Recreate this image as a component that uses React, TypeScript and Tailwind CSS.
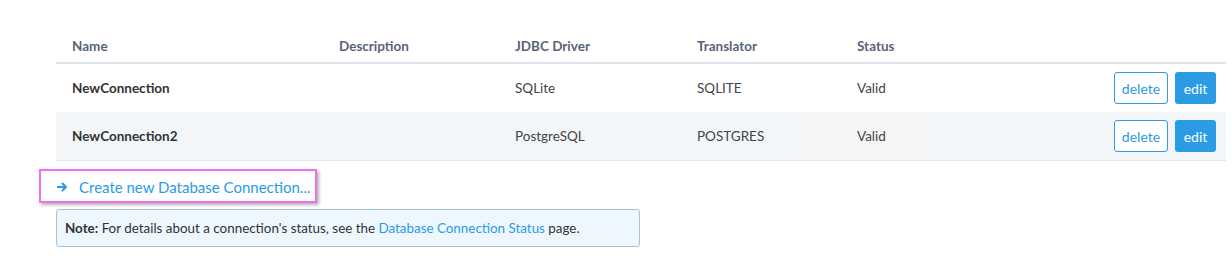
import React from "react";

const rows = [
  { name: "NewConnection", description: "", driver: "SQLite", translator: "SQLITE", status: "Valid" },
  { name: "NewConnection2", description: "", driver: "PostgreSQL", translator: "POSTGRES", status: "Valid" },
];

export default function App() {
  return (
    <div className="h-[275px] w-[1232px] overflow-hidden bg-white font-['Lato','Liberation_Sans',sans-serif] text-[13.5px] text-[#444]">
      <div className="pl-[56px] pr-[6px] pt-[30px]">
        <table className="w-full table-fixed border-separate border-spacing-0">
          <colgroup>
            <col className="w-[267px]" />
            <col className="w-[176px]" />
            <col className="w-[182px]" />
            <col className="w-[160px]" />
            <col className="w-[120px]" />
            <col />
          </colgroup>
          <thead>
            <tr className="text-left text-[#5a6478]">
              <th className="h-[34px] border-b-2 border-[#dfe4ea] px-4 font-bold">Name</th>
              <th className="border-b-2 border-[#dfe4ea] px-4 font-bold">Description</th>
              <th className="border-b-2 border-[#dfe4ea] px-4 font-bold">JDBC Driver</th>
              <th className="border-b-2 border-[#dfe4ea] px-4 font-bold">Translator</th>
              <th className="border-b-2 border-[#dfe4ea] px-4 font-bold">Status</th>
              <th className="border-b-2 border-[#dfe4ea]" />
            </tr>
          </thead>
          <tbody>
            {rows.map((r, i) => {
              const cell = i === 1 ? "h-[49px] border-b border-[#e3e7eb]" : "h-[48px]";
              return (
                <tr
                  key={r.name}
                  className={
                    i === 1
                      ? "bg-[linear-gradient(to_right,#f3f6f9_749px,#f5f5f5_749px,#f5f5f5_877px,#f3f6f9_877px)]"
                      : ""
                  }
                >
                  <td className={`${cell} px-4 font-bold text-[#333]`}>{r.name}</td>
                  <td className={`${cell} px-4`}>{r.description}</td>
                  <td className={`${cell} px-4`}>{r.driver}</td>
                  <td className={`${cell} px-4`}>{r.translator}</td>
                  <td className={`${cell} px-4`}>{r.status}</td>
                  <td className={`${cell} pr-[10px]`}>
                    <div className="flex justify-end gap-[7px]">
                      <button className="h-[32px] w-[54px] rounded-[3px] border border-[#2b9be6] bg-white text-[14px] text-[#2b9be6]">
                        delete
                      </button>
                      <button className="h-[32px] w-[41px] rounded-[3px] bg-[#2b9be6] text-[14px] text-white">
                        edit
                      </button>
                    </div>
                  </td>
                </tr>
              );
            })}
          </tbody>
        </table>
      </div>

      <div className="ml-[39px] mt-[8px] flex h-[34px] w-[278px] items-center border-2 border-[#f46cf0] pl-[16px] pt-[2px] shadow-[2px_2px_3px_rgba(0,0,0,0.3)]">
        <svg width="11" height="10" viewBox="0 0 11 10" className="text-[#2b9be6]">
          <path d="M0.5 5H9M5.5 1.5L9 5L5.5 8.5" fill="none" stroke="currentColor" strokeWidth="2" strokeLinecap="round" strokeLinejoin="round" />
        </svg>
        <span className="ml-[11px] text-[15px] text-[#2b9be6]">Create new Database Connection...</span>
      </div>

      <div className="ml-[56px] mt-[6px] flex h-[38px] w-[584px] items-center rounded-[3px] border border-[#a9c3d8] bg-[#eef7fe] pl-[8px] text-[13.4px] text-[#333]">
        <span>
          <b>Note:</b> For details about a connection's status, see the{" "}
          <span className="text-[#2b9be6]">Database Connection Status</span> page.
        </span>
      </div>
    </div>
  );
}
